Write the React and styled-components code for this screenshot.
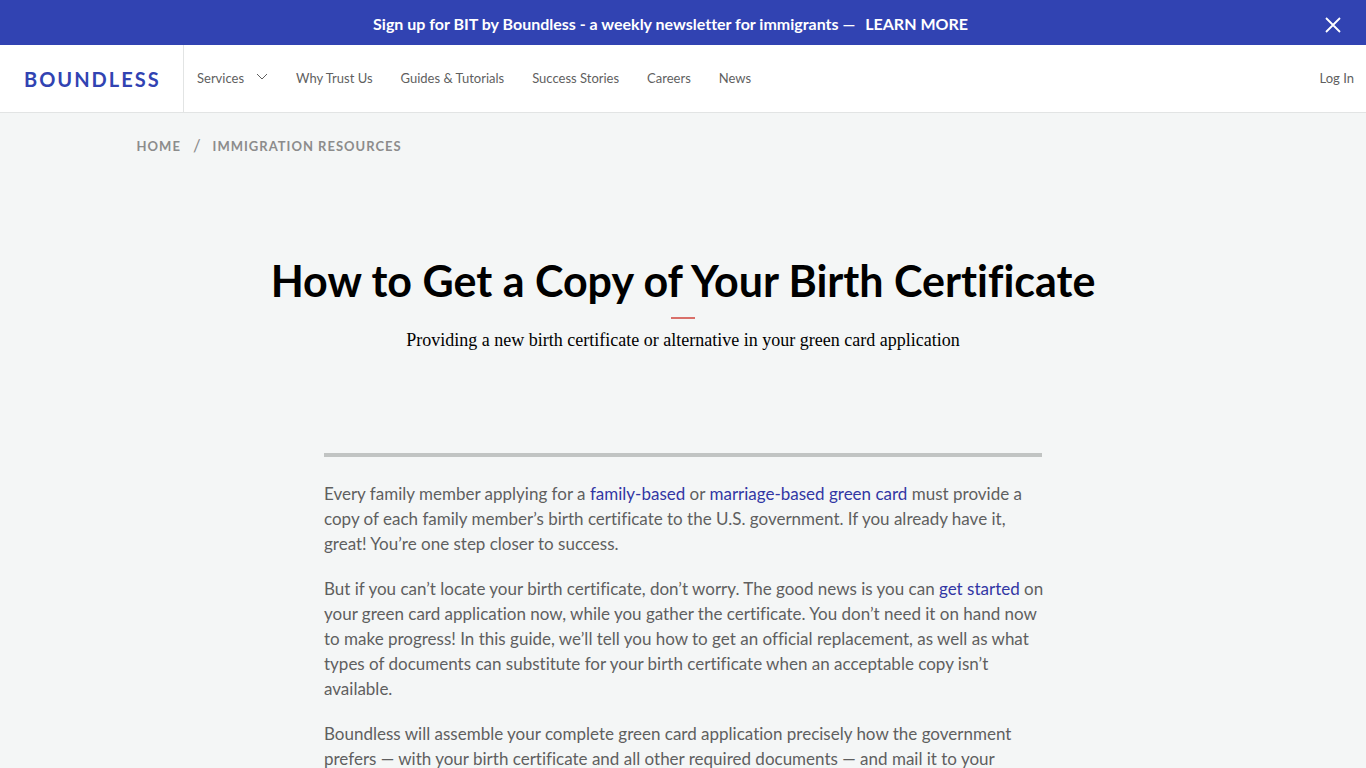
import React from 'react';
import styled, { createGlobalStyle, ThemeProvider } from 'styled-components';

const theme = {
  colors: {
    primary: '#3143b2',
    link: '#3236a4',
    accent: '#d9706a',
    text: '#5f5f5f',
    muted: '#8c8c8c',
    borderline: '#e2e4e4',
    rule: '#c1c4c3',
    background: '#f4f6f6',
  },
  fonts: {
    sans: '"Lato", "Open Sans", sans-serif',
    serif: '"Liberation Serif", serif',
  },
};

const links = ['Why Trust Us', 'Guides & Tutorials', 'Success Stories', 'Careers', 'News'];

const Banner = () => (
  <BannerWrapper>
    <BannerText>
      Sign up for BIT by Boundless - a weekly newsletter for immigrants —
      <BannerLink href="#newsletter">LEARN MORE</BannerLink>
    </BannerText>
    <CloseButton type="button" aria-label="Close">
      <svg width="16" height="16" viewBox="0 0 16 16" fill="none" stroke="currentColor" strokeWidth="1.8">
        <path d="M1 1L15 15M15 1L1 15" />
      </svg>
    </CloseButton>
  </BannerWrapper>
);

const Header = () => (
  <HeaderWrapper>
    <Logo href="#home">BOUNDLESS</Logo>
    <Nav>
      <ServicesButton type="button">
        Services
        <Chevron width="12" height="7" viewBox="0 0 12 7" fill="none" stroke="currentColor">
          <path d="M1 1L6 6L11 1" />
        </Chevron>
      </ServicesButton>
      {links.map(name => <NavLink href="#" key={name}>{name}</NavLink>)}
    </Nav>
    <NavLink href="#login">Log In</NavLink>
  </HeaderWrapper>
);

const App = () => (
  <ThemeProvider theme={theme}>
    <GlobalStyle />
    <Banner />
    <Header />
    <main>
      <Breadcrumb aria-label="Breadcrumb">
        <Crumb href="#home">HOME</Crumb>
        <Slash>/</Slash>
        <Crumb href="#resources">IMMIGRATION RESOURCES</Crumb>
      </Breadcrumb>
      <Hero>
        <Title>How to Get a Copy of Your Birth Certificate</Title>
        <Dash />
        <Subtitle>Providing a new birth certificate or alternative in your green card application</Subtitle>
      </Hero>
      <Article>
        <Paragraph>
          Every family member applying for a <TextLink href="#family">family-based</TextLink> or{' '}
          <TextLink href="#marriage">marriage-based green card</TextLink> must provide a copy of each
          family member’s birth certificate to the U.S. government. If you already have it, great!
          You’re one step closer to success.
        </Paragraph>
        <Paragraph>
          But if you can’t locate your birth certificate, don’t worry. The good news is you
          can <TextLink href="#start">get started</TextLink> on your green card application now, while
          you gather the certificate. You don’t need it on hand now to make progress! In this guide,
          we’ll tell you how to get an official replacement, as well as what types of documents can
          substitute for your birth certificate when an acceptable copy isn’t available.
        </Paragraph>
        <Paragraph>
          Boundless will assemble your complete green card application precisely how the government
          prefers — with your birth certificate and all other required documents — and mail it to your
        </Paragraph>
      </Article>
    </main>
  </ThemeProvider>
);

export default App;

const GlobalStyle = createGlobalStyle`
  * {
    box-sizing: border-box;
  }
  body {
    margin: 0;
    background: ${props => props.theme.colors.background};
    color: ${props => props.theme.colors.text};
    font-family: ${props => props.theme.fonts.sans};
    font-variant-ligatures: no-common-ligatures;
  }
  h1, p {
    margin: 0;
  }
  a {
    text-decoration: none;
  }
  button {
    padding: 0;
    border: 0;
    background: none;
    font-family: inherit;
    cursor: pointer;
  }
`

const BannerWrapper = styled.div`
  display: grid;
  grid-template-columns: 1fr auto 1fr;
  align-items: center;
  height: 45px;
  padding: 4px 25px 0;
  background: ${props => props.theme.colors.primary};
  color: #fff;
`
const BannerText = styled.p`
  grid-column: 2;
  margin: 0 25px 2px 0;
  font-size: 16px;
  font-weight: 700;
  line-height: 24px;
`
const BannerLink = styled.a`
  margin-left: 10px;
  color: inherit;
`
const CloseButton = styled.button`
  display: flex;
  justify-self: end;
  color: inherit;
`
const HeaderWrapper = styled.header`
  display: flex;
  align-items: center;
  height: 68px;
  padding-right: 12px;
  border-bottom: 1px solid ${props => props.theme.colors.borderline};
  background: #fff;
`
const Logo = styled.a`
  display: flex;
  align-items: center;
  align-self: stretch;
  width: 184px;
  padding-left: 24px;
  border-right: 1px solid ${props => props.theme.colors.borderline};
  font-size: 20px;
  font-weight: 700;
  letter-spacing: 2px;
  color: ${props => props.theme.colors.primary};
`
const Nav = styled.nav`
  display: flex;
  flex: 1;
  align-items: center;
  gap: 28px;
  padding-left: 13px;
`
const NavLink = styled.a`
  margin-bottom: 2px;
  font-size: 13px;
  line-height: 20px;
  color: ${props => props.theme.colors.text};
`
const ServicesButton = styled.button`
  display: flex;
  align-items: center;
  gap: 12px;
  margin-bottom: 2px;
  font-size: 13px;
  line-height: 20px;
  color: ${props => props.theme.colors.text};
`
const Chevron = styled.svg`
  margin-bottom: 2px;
`
const Breadcrumb = styled.nav`
  display: flex;
  align-items: center;
  gap: 12px;
  width: 80%;
  margin: 0 auto;
  padding-top: 23px;
  line-height: 20px;
  color: ${props => props.theme.colors.muted};
`
const Crumb = styled.a`
  font-size: 13px;
  font-weight: 700;
  letter-spacing: 1px;
  color: inherit;
`
const Slash = styled.span`
  font-size: 17px;
`
const Hero = styled.section`
  display: flex;
  flex-direction: column;
  align-items: center;
  padding: 97px 24px 101px;
  color: #000;
  text-align: center;
`
const Title = styled.h1`
  font-size: 43px;
  font-weight: 700;
  line-height: 56px;
`
const Dash = styled.div`
  width: 24px;
  height: 2px;
  margin: 8px 0 9px;
  background: ${props => props.theme.colors.accent};
`
const Subtitle = styled.p`
  font-family: ${props => props.theme.fonts.serif};
  font-size: 18px;
  line-height: 24px;
`
const Article = styled.article`
  display: flex;
  flex-direction: column;
  gap: 20px;
  max-width: 718px;
  margin: 0 auto;
  padding: 24px 0;
  border-top: 4px solid ${props => props.theme.colors.rule};
  font-size: 17px;
  line-height: 25px;
`
const Paragraph = styled.p`
  margin-right: -4px;
`
const TextLink = styled.a`
  color: ${props => props.theme.colors.link};
`
